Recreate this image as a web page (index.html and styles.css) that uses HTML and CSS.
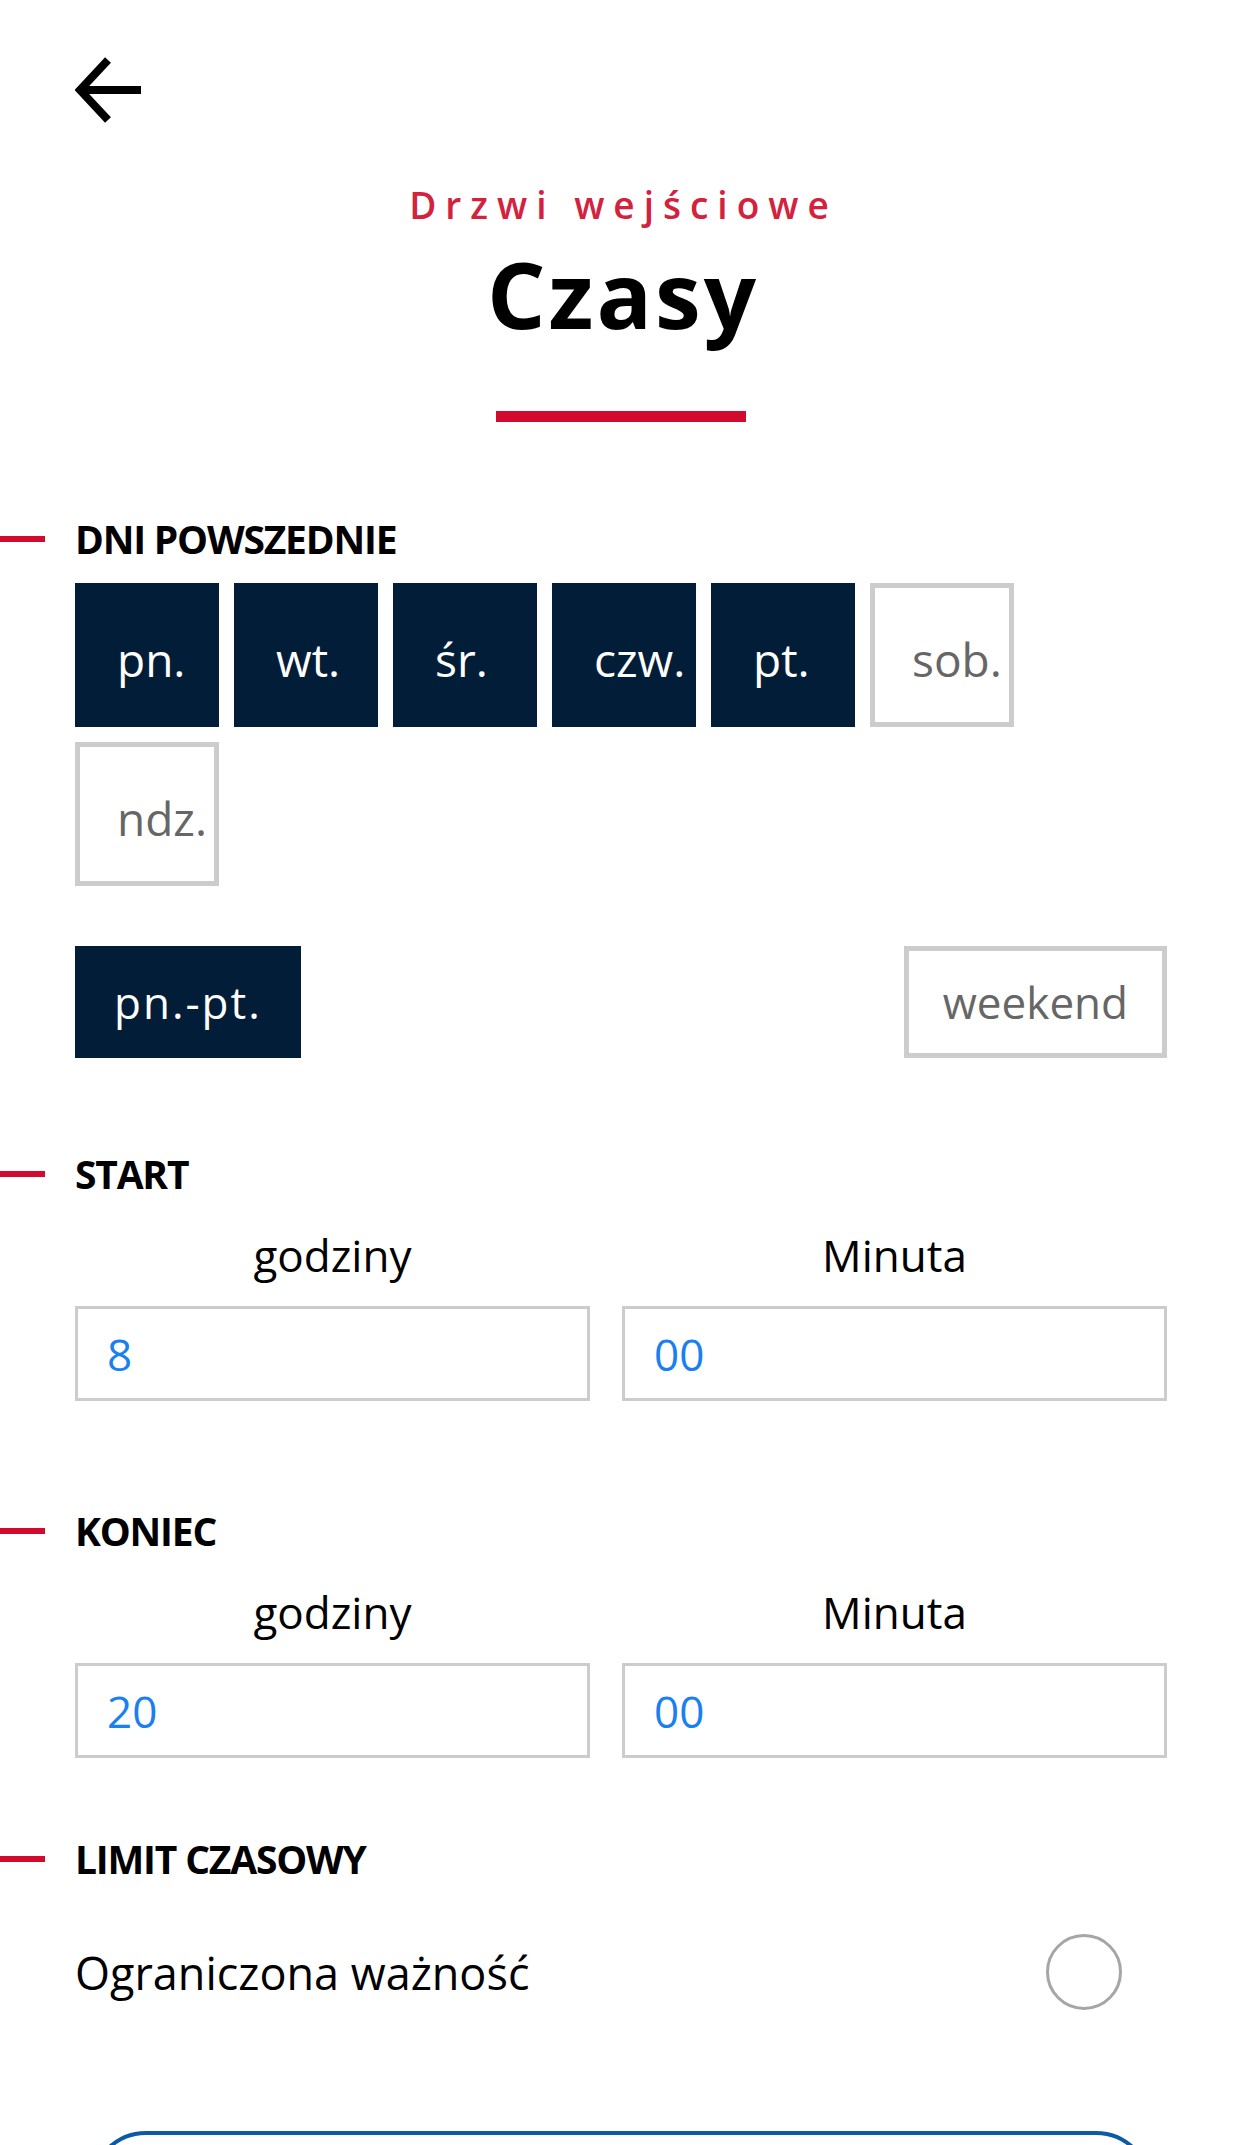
FILE: index.html
```html
<!DOCTYPE html>
<html lang="pl">
<head>
    <meta charset="UTF-8">
    <title>Czasy</title>
    <link rel="stylesheet" href="styles.css">
</head>
<body>

    <div class="topbar">
        <svg class="back" viewBox="0 0 66 66" width="66" height="66">
            <polyline points="33,3 5,33 33,63" fill="none" stroke="#000" stroke-width="8"/>
            <line x1="5" y1="33" x2="66" y2="33" stroke="#000" stroke-width="8"/>
        </svg>
    </div>

    <div class="heading">
        <div class="subtitle">Drzwi wejściowe</div>
        <h1>Czasy</h1>
        <div class="underline"></div>
    </div>

    <main class="content">
        <h2 class="sec-head sec-days"><span class="dash"></span>DNI POWSZEDNIE</h2>
        <div class="days">
            <button class="day on">pn.</button>
            <button class="day on">wt.</button>
            <button class="day on">śr.</button>
            <button class="day on">czw.</button>
            <button class="day on">pt.</button>
            <button class="day">sob.</button>
            <button class="day">ndz.</button>
        </div>
        <div class="presets">
            <button class="preset on">pn.-pt.</button>
            <button class="preset">weekend</button>
        </div>

        <h2 class="sec-head sec-start"><span class="dash"></span>START</h2>
        <div class="time-grid">
            <div class="time-label">godziny</div>
            <div class="time-label">Minuta</div>
            <input class="time-input" type="text" value="8">
            <input class="time-input" type="text" value="00">
        </div>

        <h2 class="sec-head sec-end"><span class="dash"></span>KONIEC</h2>
        <div class="time-grid">
            <div class="time-label">godziny</div>
            <div class="time-label">Minuta</div>
            <input class="time-input" type="text" value="20">
            <input class="time-input" type="text" value="00">
        </div>

        <h2 class="sec-head sec-limit"><span class="dash"></span>LIMIT CZASOWY</h2>
        <div class="limit-row">
            <span>Ograniczona ważność</span>
            <span class="radio"></span>
        </div>

        <button class="save" aria-label="Zapisz"></button>
    </main>

</body>
</html>
```

FILE: styles.css
```css
body {
    margin: 0;
    background: #ffffff;
    color: #000000;
    font-family: "Open Sans", "Noto Sans", sans-serif;
}

.topbar {
    padding: 57px 75px 0;
    height: 66px;
}

.back {
    display: block;
}

.heading {
    margin-top: 60px;
    text-align: center;
}

.subtitle {
    color: #d4213d;
    font-size: 37px;
    font-weight: 600;
    line-height: 44px;
    letter-spacing: 9px;
    margin-right: -5px;
}

h1 {
    margin: 17px 0 0;
    font-size: 92px;
    font-weight: 700;
    line-height: 100px;
    letter-spacing: 3px;
    margin-right: -4px;
}

.underline {
    width: 250px;
    height: 11px;
    margin: 67px auto 0;
    background: #d20a2e;
}

.content {
    padding: 0 75px;
}

/* nagłówki sekcji z czerwoną kreską po lewej */
.sec-head {
    display: flex;
    align-items: center;
    gap: 30px;
    margin: 0 0 0 -75px;
    font-size: 39px;
    font-weight: 700;
    line-height: 44px;
    letter-spacing: -1.2px;
}

.dash {
    width: 45px;
    height: 6px;
    background: #d20a2e;
}

.sec-days { margin-top: 95px; }
.sec-start { margin-top: 94px; }
.sec-end { margin-top: 108px; }
.sec-limit { margin-top: 79px; }

button {
    font-family: inherit;
    cursor: pointer;
}

.days {
    display: flex;
    flex-wrap: wrap;
    gap: 15px;
    margin-top: 22px;
}

.day {
    width: 144px;
    height: 144px;
    box-sizing: border-box;
    display: flex;
    align-items: flex-start;
    padding: 41px 0 0 37px;
    border: 5px solid #cccccc;
    background: #ffffff;
    color: #666666;
    font-size: 46px;
    line-height: 60px;
    white-space: nowrap;
}

.day.on,
.preset.on {
    background: #021d38;
    border-color: #021d38;
    color: #ffffff;
}

.presets {
    display: flex;
    justify-content: space-between;
    margin-top: 60px;
}

.preset {
    height: 112px;
    box-sizing: border-box;
    padding: 0 34px;
    border: 5px solid #cccccc;
    background: #ffffff;
    color: #666666;
    font-size: 44px;
    line-height: 60px;
}

.preset.on {
    padding: 0 34px;
    letter-spacing: 2px;
}

.time-grid {
    display: grid;
    grid-template-columns: 515px 1fr;
    column-gap: 32px;
    row-gap: 25px;
    margin-top: 33px;
}

.time-label {
    text-align: center;
    font-size: 44px;
    line-height: 52px;
}

.time-input {
    height: 95px;
    box-sizing: border-box;
    width: 100%;
    padding: 0 0 0 29px;
    border: 3px solid #cccccc;
    font-family: inherit;
    font-size: 44px;
    color: #1a7ff0;
    outline: none;
}

.limit-row {
    display: flex;
    align-items: center;
    justify-content: space-between;
    margin-top: 53px;
    padding-right: 45px;
    font-size: 45px;
}

.radio {
    width: 76px;
    height: 76px;
    box-sizing: border-box;
    border: 3px solid #a6a6a6;
    border-radius: 50%;
}

.save {
    display: block;
    width: calc(100% - 30px);
    height: 112px;
    margin: 121px 15px 40px;
    border: 4px solid #0c5aa6;
    border-radius: 56px;
    background: #ffffff;
}
```
